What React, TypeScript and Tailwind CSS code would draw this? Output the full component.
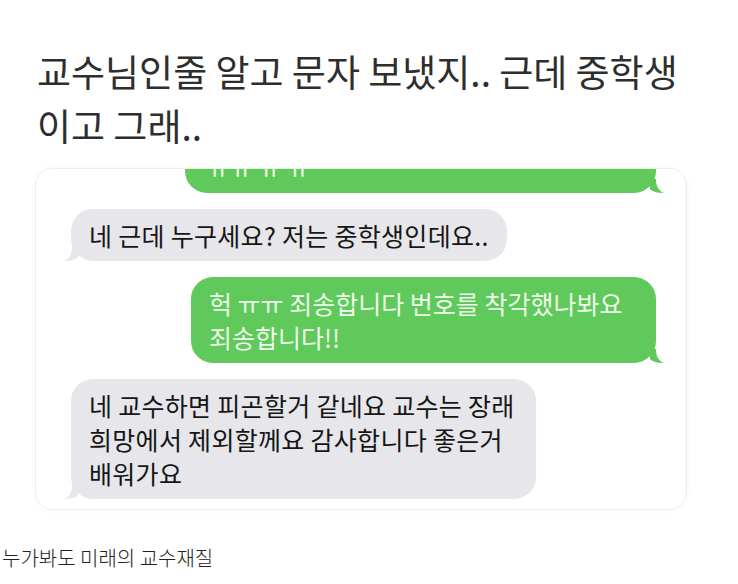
import type { ReactNode } from "react";

const font = { fontFamily: '"Noto Sans CJK KR", "Noto Sans", sans-serif' };

function Tail({ side, color }: { side: "left" | "right"; color: string }) {
  const left = side === "left";
  return (
    <svg
      width="14"
      height="16"
      viewBox="0 0 14 16"
      className={left ? "absolute -left-[7px] bottom-0" : "absolute -right-[8px] bottom-0"}
      style={{ transform: left ? undefined : "scaleX(-1)" }}
    >
      <path d="M14 0 L14 12 C11 15 6 16 0 16 C5 14 8 10 8 2 Z" fill={color} />
    </svg>
  );
}

function Received({ children, wide = false }: { children: ReactNode; wide?: boolean }) {
  return (
    <div
      className={`relative self-start rounded-[22px] bg-[#e6e6eb] px-[18px] py-[9px] text-[25px] leading-[34px] tracking-[0.3px] text-[#161616] ${
        wide ? "w-[465px]" : "w-fit"
      }`}
    >
      {children}
      <Tail side="left" color="#e6e6eb" />
    </div>
  );
}

function Sent({ children, clipped = false }: { children: ReactNode; clipped?: boolean }) {
  return (
    <div
      className={`relative self-end rounded-[22px] bg-[#60c95b] px-[18px] py-[9px] text-[25px] leading-[34px] text-[#eefbea] ${
        clipped ? "-mt-[28px] w-[471px]" : "w-[465px]"
      }`}
    >
      {children}
      <Tail side="right" color="#60c95b" />
    </div>
  );
}

export default function App() {
  return (
    <div className="h-[584px] w-[738px] overflow-hidden bg-white" style={font}>
      <h1 className="pl-[37px] pt-[44px] text-[37px] font-normal leading-[54px] text-[#2e2e2e]">
        교수님인줄 알고 문자 보냈지.. 근데 중학생
        <br />
        이고 그래..
      </h1>

      <div className="ml-[35px] mt-[16px] flex h-[342px] w-[652px] flex-col gap-[16px] overflow-hidden rounded-[18px] border border-[#eeeeee] pl-[35px] pr-[30px] shadow-[0_0_6px_rgba(0,0,0,0.04)]">
        <Sent clipped>
          <span className="pl-[4px]">ㅠㅠ ㅠ ㅠ</span>
        </Sent>
        <Received>네 근데 누구세요? 저는 중학생인데요..</Received>
        <Sent>
          헉 ㅠㅠ 죄송합니다 번호를 착각했나봐요
          <br />
          죄송합니다!!
        </Sent>
        <Received wide>
          네 교수하면 피곤할거 같네요 교수는 장래
          <br />
          희망에서 제외할께요 감사합니다 좋은거
          <br />
          배워가요
        </Received>
      </div>

      <p className="mt-[34px] pl-[2px] text-[20px] font-light leading-[28px] text-[#222222]">
        누가봐도 미래의 교수재질
      </p>
    </div>
  );
}
